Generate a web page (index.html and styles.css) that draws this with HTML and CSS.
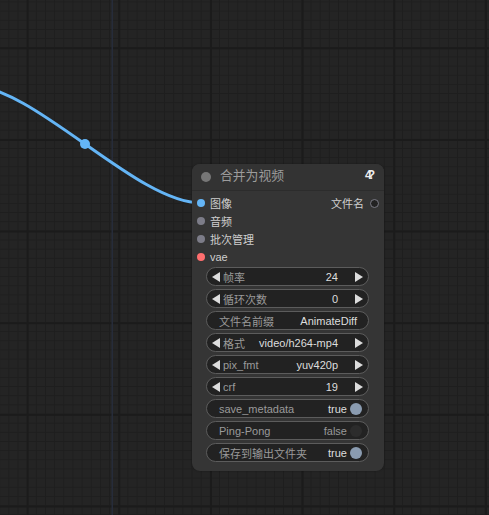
FILE: index.html
```html
<!DOCTYPE html>
<html>
<head>
<meta charset="utf-8">
<link rel="stylesheet" href="styles.css">
</head>
<body>
<div class="canvas">
  <svg class="links" width="489" height="515" viewBox="0 0 489 515">
    <rect x="111.5" y="0" width="1.5" height="515" fill="#262c3a"/>
    <path d="M -31 85 C 34 85, 136 203, 201 203" fill="none" stroke="#64b5f6" stroke-width="3"/>
    <circle cx="85" cy="144" r="5" fill="#64b5f6"/>
  </svg>
  <div class="node">
    <div class="title">
      <span class="tdot"></span>
      <span class="ttext">合并为视频</span>
      <span class="badge">4?</span>
    </div>
    <div class="slots">
      <div class="inputs">
        <div class="slot"><span class="sdot blue"></span><span class="slbl">图像</span></div>
        <div class="slot"><span class="sdot grey"></span><span class="slbl">音频</span></div>
        <div class="slot"><span class="sdot grey"></span><span class="slbl">批次管理</span></div>
        <div class="slot"><span class="sdot red"></span><span class="slbl">vae</span></div>
      </div>
      <div class="outputs">
        <div class="slot out"><span class="slbl">文件名</span><span class="sdot hollow"></span></div>
      </div>
    </div>
    <div class="widgets">
      <div class="w arrows">
        <svg class="arr" width="8" height="10" viewBox="0 0 8 10"><polygon points="8,0 8,10 0,5" fill="#ddd"/></svg>
        <span class="lbl">帧率</span><span class="val">24</span>
        <svg class="arr" width="8" height="10" viewBox="0 0 8 10"><polygon points="0,0 0,10 8,5" fill="#ddd"/></svg>
      </div>
      <div class="w arrows">
        <svg class="arr" width="8" height="10" viewBox="0 0 8 10"><polygon points="8,0 8,10 0,5" fill="#ddd"/></svg>
        <span class="lbl">循环次数</span><span class="val">0</span>
        <svg class="arr" width="8" height="10" viewBox="0 0 8 10"><polygon points="0,0 0,10 8,5" fill="#ddd"/></svg>
      </div>
      <div class="w text">
        <span class="lbl">文件名前缀</span><span class="val">AnimateDiff</span>
      </div>
      <div class="w arrows">
        <svg class="arr" width="8" height="10" viewBox="0 0 8 10"><polygon points="8,0 8,10 0,5" fill="#ddd"/></svg>
        <span class="lbl">格式</span><span class="val">video/h264-mp4</span>
        <svg class="arr" width="8" height="10" viewBox="0 0 8 10"><polygon points="0,0 0,10 8,5" fill="#ddd"/></svg>
      </div>
      <div class="w arrows">
        <svg class="arr" width="8" height="10" viewBox="0 0 8 10"><polygon points="8,0 8,10 0,5" fill="#ddd"/></svg>
        <span class="lbl">pix_fmt</span><span class="val">yuv420p</span>
        <svg class="arr" width="8" height="10" viewBox="0 0 8 10"><polygon points="0,0 0,10 8,5" fill="#ddd"/></svg>
      </div>
      <div class="w arrows">
        <svg class="arr" width="8" height="10" viewBox="0 0 8 10"><polygon points="8,0 8,10 0,5" fill="#ddd"/></svg>
        <span class="lbl">crf</span><span class="val">19</span>
        <svg class="arr" width="8" height="10" viewBox="0 0 8 10"><polygon points="0,0 0,10 8,5" fill="#ddd"/></svg>
      </div>
      <div class="w toggle">
        <span class="lbl">save_metadata</span><span class="val">true</span><span class="knob on"></span>
      </div>
      <div class="w toggle">
        <span class="lbl">Ping-Pong</span><span class="val off">false</span><span class="knob"></span>
      </div>
      <div class="w toggle">
        <span class="lbl">保存到输出文件夹</span><span class="val">true</span><span class="knob on"></span>
      </div>
    </div>
  </div>
</div>
</body>
</html>
```

FILE: styles.css
```css
html, body {
  margin: 0;
  padding: 0;
  width: 489px;
  height: 515px;
  overflow: hidden;
  background: #232323;
}

.canvas {
  position: relative;
  width: 489px;
  height: 515px;
  background-color: #242424;
  background-image:
    linear-gradient(to right, #1b1b1b 0, #1b1b1b 1.5px, transparent 1.5px),
    linear-gradient(to bottom, #1b1b1b 0, #1b1b1b 1.5px, transparent 1.5px),
    linear-gradient(to right, #1e1e1e 0, #1e1e1e 1px, transparent 1px),
    linear-gradient(to bottom, #1e1e1e 0, #1e1e1e 1px, transparent 1px);
  background-size: 91.67px 91.67px, 91.67px 91.67px, 9.167px 9.167px, 9.167px 9.167px;
  background-position: 26.7px 0, 0 47.3px, 8.4px 0, 0 1.5px;
  font-family: "Liberation Sans", Arial, "Noto Sans CJK SC", sans-serif;
}

.links {
  position: absolute;
  left: 0;
  top: 0;
}

.node {
  position: absolute;
  left: 192px;
  top: 164px;
  width: 192px;
  background: #353535;
  border-radius: 8px;
  padding-bottom: 9px;
  box-shadow: 0 0 2px rgba(0, 0, 0, 0.35);
}

.title {
  height: 24px;
  padding-bottom: 2px;
  display: flex;
  align-items: center;
  padding-left: 9px;
  padding-right: 8px;
  border-bottom: 1px solid #2c2c2c;
  background: #333;
  border-radius: 8px 8px 0 0;
}

.tdot {
  width: 10px;
  height: 10px;
  border-radius: 50%;
  background: #777;
  flex: none;
  margin-top: 2px;
}

.ttext {
  margin-left: 9px;
  margin-bottom: 3px;
  font-size: 12.8px;
  color: #9c9c9c;
  flex: 1;
}

.badge {
  display: block;
  font-weight: bold;
  font-size: 12px;
  color: #a0a0a0;
  letter-spacing: -4px;
  margin-right: 5px;
  margin-bottom: 2px;
}

.badge::first-letter {
  color: #eee;
}

.slots {
  display: flex;
  justify-content: space-between;
  padding-top: 3px;
}

.inputs, .outputs {
  display: flex;
  flex-direction: column;
}

.slot {
  height: 18px;
  display: flex;
  align-items: center;
  padding-left: 5px;
  font-size: 11px;
  color: #cfcfcf;
}

.slot.out {
  padding-left: 0;
  padding-right: 5px;
}

.sdot {
  width: 8px;
  height: 8px;
  border-radius: 50%;
  flex: none;
  box-sizing: border-box;
}

.sdot.blue { background: #64b5f6; }
.sdot.grey { background: #7c7c88; }
.sdot.red { background: #ff6e6e; }
.sdot.hollow {
  width: 9px;
  height: 9px;
  background: #222;
  border: 1.5px solid #7a7a84;
}

.slot .slbl {
  margin-left: 5px;
}

.slot.out .slbl {
  margin-left: 0;
  margin-right: 6px;
}

.widgets {
  display: flex;
  flex-direction: column;
  gap: 3px;
  margin: 1px 15px 0 14px;
}

.w {
  height: 19px;
  box-sizing: border-box;
  border: 1px solid #5c5c5c;
  background: #222;
  border-radius: 10px;
  display: flex;
  align-items: center;
  font-size: 11px;
  color: #999;
  white-space: nowrap;
}

.w .lbl {
  flex: 1;
  color: #9a9a9a;
}

.w .val {
  color: #ddd;
}

.w .val.off {
  color: #999;
}

.w.arrows {
  padding-left: 5px;
  padding-right: 5px;
}

.w.arrows .lbl {
  margin-left: 3px;
}

.w.arrows .val {
  margin-right: 17px;
}

.arr {
  flex: none;
  display: block;
}

.w.text {
  padding-left: 12px;
  padding-right: 11px;
}

.w.toggle {
  padding-left: 12px;
  padding-right: 6px;
}

.knob {
  width: 12px;
  height: 12px;
  border-radius: 50%;
  background: #2c2c2c;
  margin-left: 3px;
  flex: none;
}

.knob.on {
  background: #8a9bb0;
}
```
